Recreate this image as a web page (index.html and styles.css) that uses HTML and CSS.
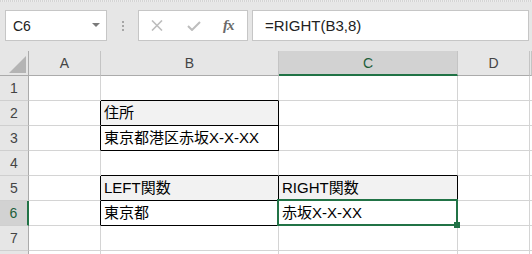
FILE: index.html
```html
<!DOCTYPE html>
<html lang="ja">
<head>
<meta charset="UTF-8">
<title>RIGHT関数</title>
<link rel="stylesheet" href="styles.css">
</head>
<body>
<div class="app">
    <div class="edge"></div>
    <div class="toolbar">
        <div class="namebox">
            <span>C6</span>
            <i class="caret"></i>
        </div>
        <div class="grip"><i></i><i></i><i></i></div>
        <div class="fxbox">
            <svg class="ico-x" width="12" height="11" viewBox="0 0 12 11"><path d="M1 0.5 L11 10.5 M11 0.5 L1 10.5" stroke="#bdbdbd" stroke-width="1.6" fill="none"/></svg>
            <svg class="ico-ok" width="14" height="10" viewBox="0 0 14 10"><path d="M1 5 L5 9 L13 1" stroke="#bdbdbd" stroke-width="2" fill="none"/></svg>
            <span class="fx">fx</span>
        </div>
        <div class="formula">=RIGHT(B3,8)</div>
    </div>

    <div class="sheet">
        <!-- header -->
        <div class="corner"><svg width="17" height="17" viewBox="0 0 17 17"><polygon points="17,0 17,17 0,17" fill="#b4b4b4"/></svg></div>
        <div class="ch">A</div>
        <div class="ch">B</div>
        <div class="ch sel">C</div>
        <div class="ch">D</div>
        <div class="ch"></div>

        <!-- 1 -->
        <div class="rh">1</div>
        <div class="c"></div>
        <div class="c kb"></div>
        <div class="c"></div>
        <div class="c"></div>
        <div class="c"></div>

        <!-- 2 -->
        <div class="rh">2</div>
        <div class="c kr"></div>
        <div class="c kr kb fill">住所</div>
        <div class="c"></div>
        <div class="c"></div>
        <div class="c"></div>

        <!-- 3 -->
        <div class="rh">3</div>
        <div class="c kr"></div>
        <div class="c kr kb">東京都港区赤坂X-X-XX</div>
        <div class="c"></div>
        <div class="c"></div>
        <div class="c"></div>

        <!-- 4 -->
        <div class="rh">4</div>
        <div class="c"></div>
        <div class="c kb"></div>
        <div class="c kb"></div>
        <div class="c"></div>
        <div class="c"></div>

        <!-- 5 -->
        <div class="rh">5</div>
        <div class="c kr"></div>
        <div class="c kr kb fill">LEFT関数</div>
        <div class="c kr kb fill">RIGHT関数</div>
        <div class="c"></div>
        <div class="c"></div>

        <!-- 6 -->
        <div class="rh sel">6</div>
        <div class="c kr"></div>
        <div class="c kr kb">東京都</div>
        <div class="c kr kb active">赤坂X-X-XX<span class="selbox"></span><span class="handle"></span></div>
        <div class="c"></div>
        <div class="c"></div>

        <!-- 7 -->
        <div class="rh">7</div>
        <div class="c"></div>
        <div class="c"></div>
        <div class="c"></div>
        <div class="c"></div>
        <div class="c"></div>

        <!-- 8 (only the top edge shows) -->
        <div class="rh"></div>
        <div class="c"></div>
        <div class="c"></div>
        <div class="c"></div>
        <div class="c"></div>
        <div class="c"></div>
    </div>
</div>
</body>
</html>
```

FILE: styles.css
```css
*{
    box-sizing: border-box;
}
html, body{
    margin: 0;
    padding: 0;
}
body{
    width: 532px;
    height: 254px;
    overflow: hidden;
    background: #fff;
    font-family: "Liberation Sans", "Noto Sans CJK JP", sans-serif;
}
.app{
    background: #e6e6e6;
}
.edge{
    height: 2px;
    background: repeating-linear-gradient(90deg, #d4d4d4 0 1px, #ececec 1px 2px);
}

/* formula bar */
.toolbar{
    display: flex;
    align-items: center;
    padding: 8px 3px 10px 5px;
}
.namebox{
    width: 102px;
    height: 31px;
    background: #fff;
    border: 1px solid #c6c6c6;
    display: flex;
    align-items: center;
    justify-content: space-between;
    padding: 0 6px 0 7px;
    font-size: 14px;
    color: #222;
}
.caret{
    width: 0;
    height: 0;
    border-left: 4px solid transparent;
    border-right: 4px solid transparent;
    border-top: 4px solid #7a7a7a;
    margin-top: -2px;
}
.grip{
    display: flex;
    flex-direction: column;
    gap: 2px;
    margin: 0 14px 0 15px;
}
.grip i{
    display: block;
    width: 2px;
    height: 2px;
    background: #a6a6a6;
}
.fxbox{
    width: 110px;
    height: 31px;
    background: #fff;
    border: 1px solid #c6c6c6;
    display: flex;
    align-items: center;
    padding-left: 12px;
}
.ico-ok{
    margin-left: 24px;
}
.fx{
    margin-left: 22px;
    font-family: "Liberation Serif", serif;
    font-style: italic;
    font-weight: bold;
    font-size: 15px;
    color: #6a6a6a;
    letter-spacing: -1px;
}
.formula{
    flex: 1;
    height: 31px;
    margin-left: 4px;
    background: #fff;
    border: 1px solid #c6c6c6;
    display: flex;
    align-items: center;
    padding-left: 12px;
    font-size: 15px;
    color: #222;
}

/* sheet */
.sheet{
    display: grid;
    grid-template-columns: 29px 72px 178px 179px 72px 2px;
    grid-auto-rows: 25px;
}
.corner{
    border-right: 1px solid #ababab;
    border-bottom: 1px solid #ababab;
    display: flex;
    justify-content: flex-end;
    align-items: flex-end;
    padding: 0 2px 2px 0;
}
.ch{
    background: #e6e6e6;
    border-right: 1px solid #c4c4c4;
    border-bottom: 1px solid #ababab;
    display: flex;
    align-items: center;
    justify-content: center;
    font-size: 14px;
    color: #444;
}
.ch.sel{
    background: #d2d2d2;
    border-bottom: 2px solid #217346;
    color: #1e5e3a;
}
.rh{
    background: #e6e6e6;
    border-right: 1px solid #ababab;
    border-bottom: 1px solid #cfcfcf;
    display: flex;
    align-items: center;
    justify-content: center;
    font-size: 14px;
    color: #444;
}
.rh.sel{
    background: #d2d2d2;
    border-right: 2px solid #217346;
    color: #1e5e3a;
}
.c{
    background: #fff;
    border-right: 1px solid #d4d4d4;
    border-bottom: 1px solid #d4d4d4;
    padding-left: 3px;
    font-size: 15px;
    line-height: 24px;
    color: #000;
    white-space: nowrap;
}
.c.fill{
    background: #f2f2f2;
}
.c.kr{
    border-right-color: #000;
}
.c.kb{
    border-bottom-color: #000;
}
.c.active{
    position: relative;
}
.selbox{
    position: absolute;
    top: -2px;
    left: -2px;
    right: -1px;
    bottom: -1px;
    border: 2px solid #217346;
}
.handle{
    position: absolute;
    right: -3px;
    bottom: -3px;
    width: 6px;
    height: 6px;
    background: #217346;
}
```
